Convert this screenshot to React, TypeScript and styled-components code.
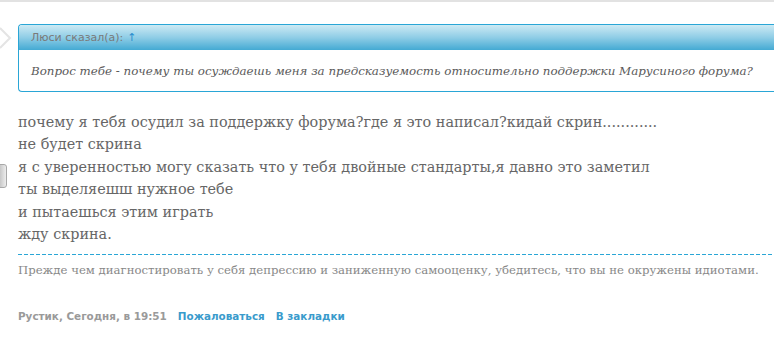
import React from 'react';
import styled, { createGlobalStyle } from 'styled-components';

const GlobalStyle = createGlobalStyle`
  html, body {
    margin: 0;
    padding: 0;
    background: #fff;
    overflow: hidden;
  }
  body {
    font-family: 'DejaVu Serif', Georgia, serif;
  }
`;

const Page = styled.div`
  position: relative;
  width: 774px;
  height: 355px;
  border-top: 2px solid #e2e2e2;
  box-sizing: border-box;
  overflow: hidden;
`;

const Post = styled.div`
  padding: 22px 0 0 18px;
`;

const Quote = styled.div`
  position: relative;
  border: 1px solid #2aa6d6;
  border-right: none;
  border-radius: 4px 0 0 4px;
  margin-right: -10px;
`;

const QuoteArrow = styled.svg`
  position: absolute;
  left: -19px;
  top: 2px;
`;

const QuoteHead = styled.div`
  height: 25px;
  display: flex;
  align-items: center;
  padding-left: 12px;
  background: linear-gradient(to bottom, #cdeaf4 0%, #8fcde6 50%, #44aad3 100%);
  border-top-left-radius: 3px;
  font-family: 'DejaVu Sans', Verdana, sans-serif;
  font-size: 11px;
  color: #7a7a7a;
`;

const UpLink = styled.span`
  color: #2a8fcf;
  margin-left: 4px;
`;

const QuoteBody = styled.div`
  height: 41px;
  display: flex;
  align-items: center;
  padding: 0 12px;
  font-style: italic;
  font-size: 11.85px;
  color: #5a5a5a;
  white-space: nowrap;
`;

const Message = styled.div`
  margin-top: 19px;
  font-size: 14.4px;
  line-height: 22.4px;
  color: #666;
`;

const Signature = styled.div`
  margin-top: 9px;
  padding-top: 9px;
  background: repeating-linear-gradient(to right, #2aa6d6 0 4px, transparent 4px 6px) top left / 100% 1px no-repeat;
  font-size: 11.7px;
  line-height: 14px;
  color: #888;
  white-space: nowrap;
`;

const Footer = styled.div`
  margin-top: 33px;
  display: flex;
  gap: 11px;
  font-family: 'DejaVu Sans', Verdana, sans-serif;
  font-size: 10.4px;
  line-height: 13px;
  font-weight: bold;
`;

const Meta = styled.span`
  color: #9a9a9a;
`;

const FootLink = styled.span`
  color: #3a9bcc;
`;

const SideTab = styled.div`
  position: absolute;
  left: -4px;
  top: 162px;
  width: 9px;
  height: 22px;
  border-radius: 3px;
  background: linear-gradient(to right, #b5b5b5, #ededed);
  border: 1px solid #a8a8a8;
`;

export default function App() {
  return (
    <Page>
      <GlobalStyle />
      <SideTab />
      <Post>
        <Quote>
          <QuoteArrow width="12" height="22" viewBox="0 0 12 22">
            <path d="M0 1 L10 11 L0 21" fill="none" stroke="#e4e4e4" strokeWidth="2" />
          </QuoteArrow>
          <QuoteHead>
            Люси сказал(а): <UpLink>↑</UpLink>
          </QuoteHead>
          <QuoteBody>
            Вопрос тебе - почему ты осуждаешь меня за предсказуемость относительно поддержки Марусиного форума?
          </QuoteBody>
        </Quote>
        <Message>
          почему я тебя осудил за поддержку форума?где я это написал?кидай скрин............<br />
          не будет скрина<br />
          я с уверенностью могу сказать что у тебя двойные стандарты,я давно это заметил<br />
          ты выделяешш нужное тебе<br />
          и пытаешься этим играть<br />
          жду скрина.
        </Message>
        <Signature>
          Прежде чем диагностировать у себя депрессию и заниженную самооценку, убедитесь, что вы не окружены идиотами.
        </Signature>
        <Footer>
          <Meta>Рустик, Сегодня, в 19:51</Meta>
          <FootLink>Пожаловаться</FootLink>
          <FootLink>В закладки</FootLink>
        </Footer>
      </Post>
    </Page>
  );
}
